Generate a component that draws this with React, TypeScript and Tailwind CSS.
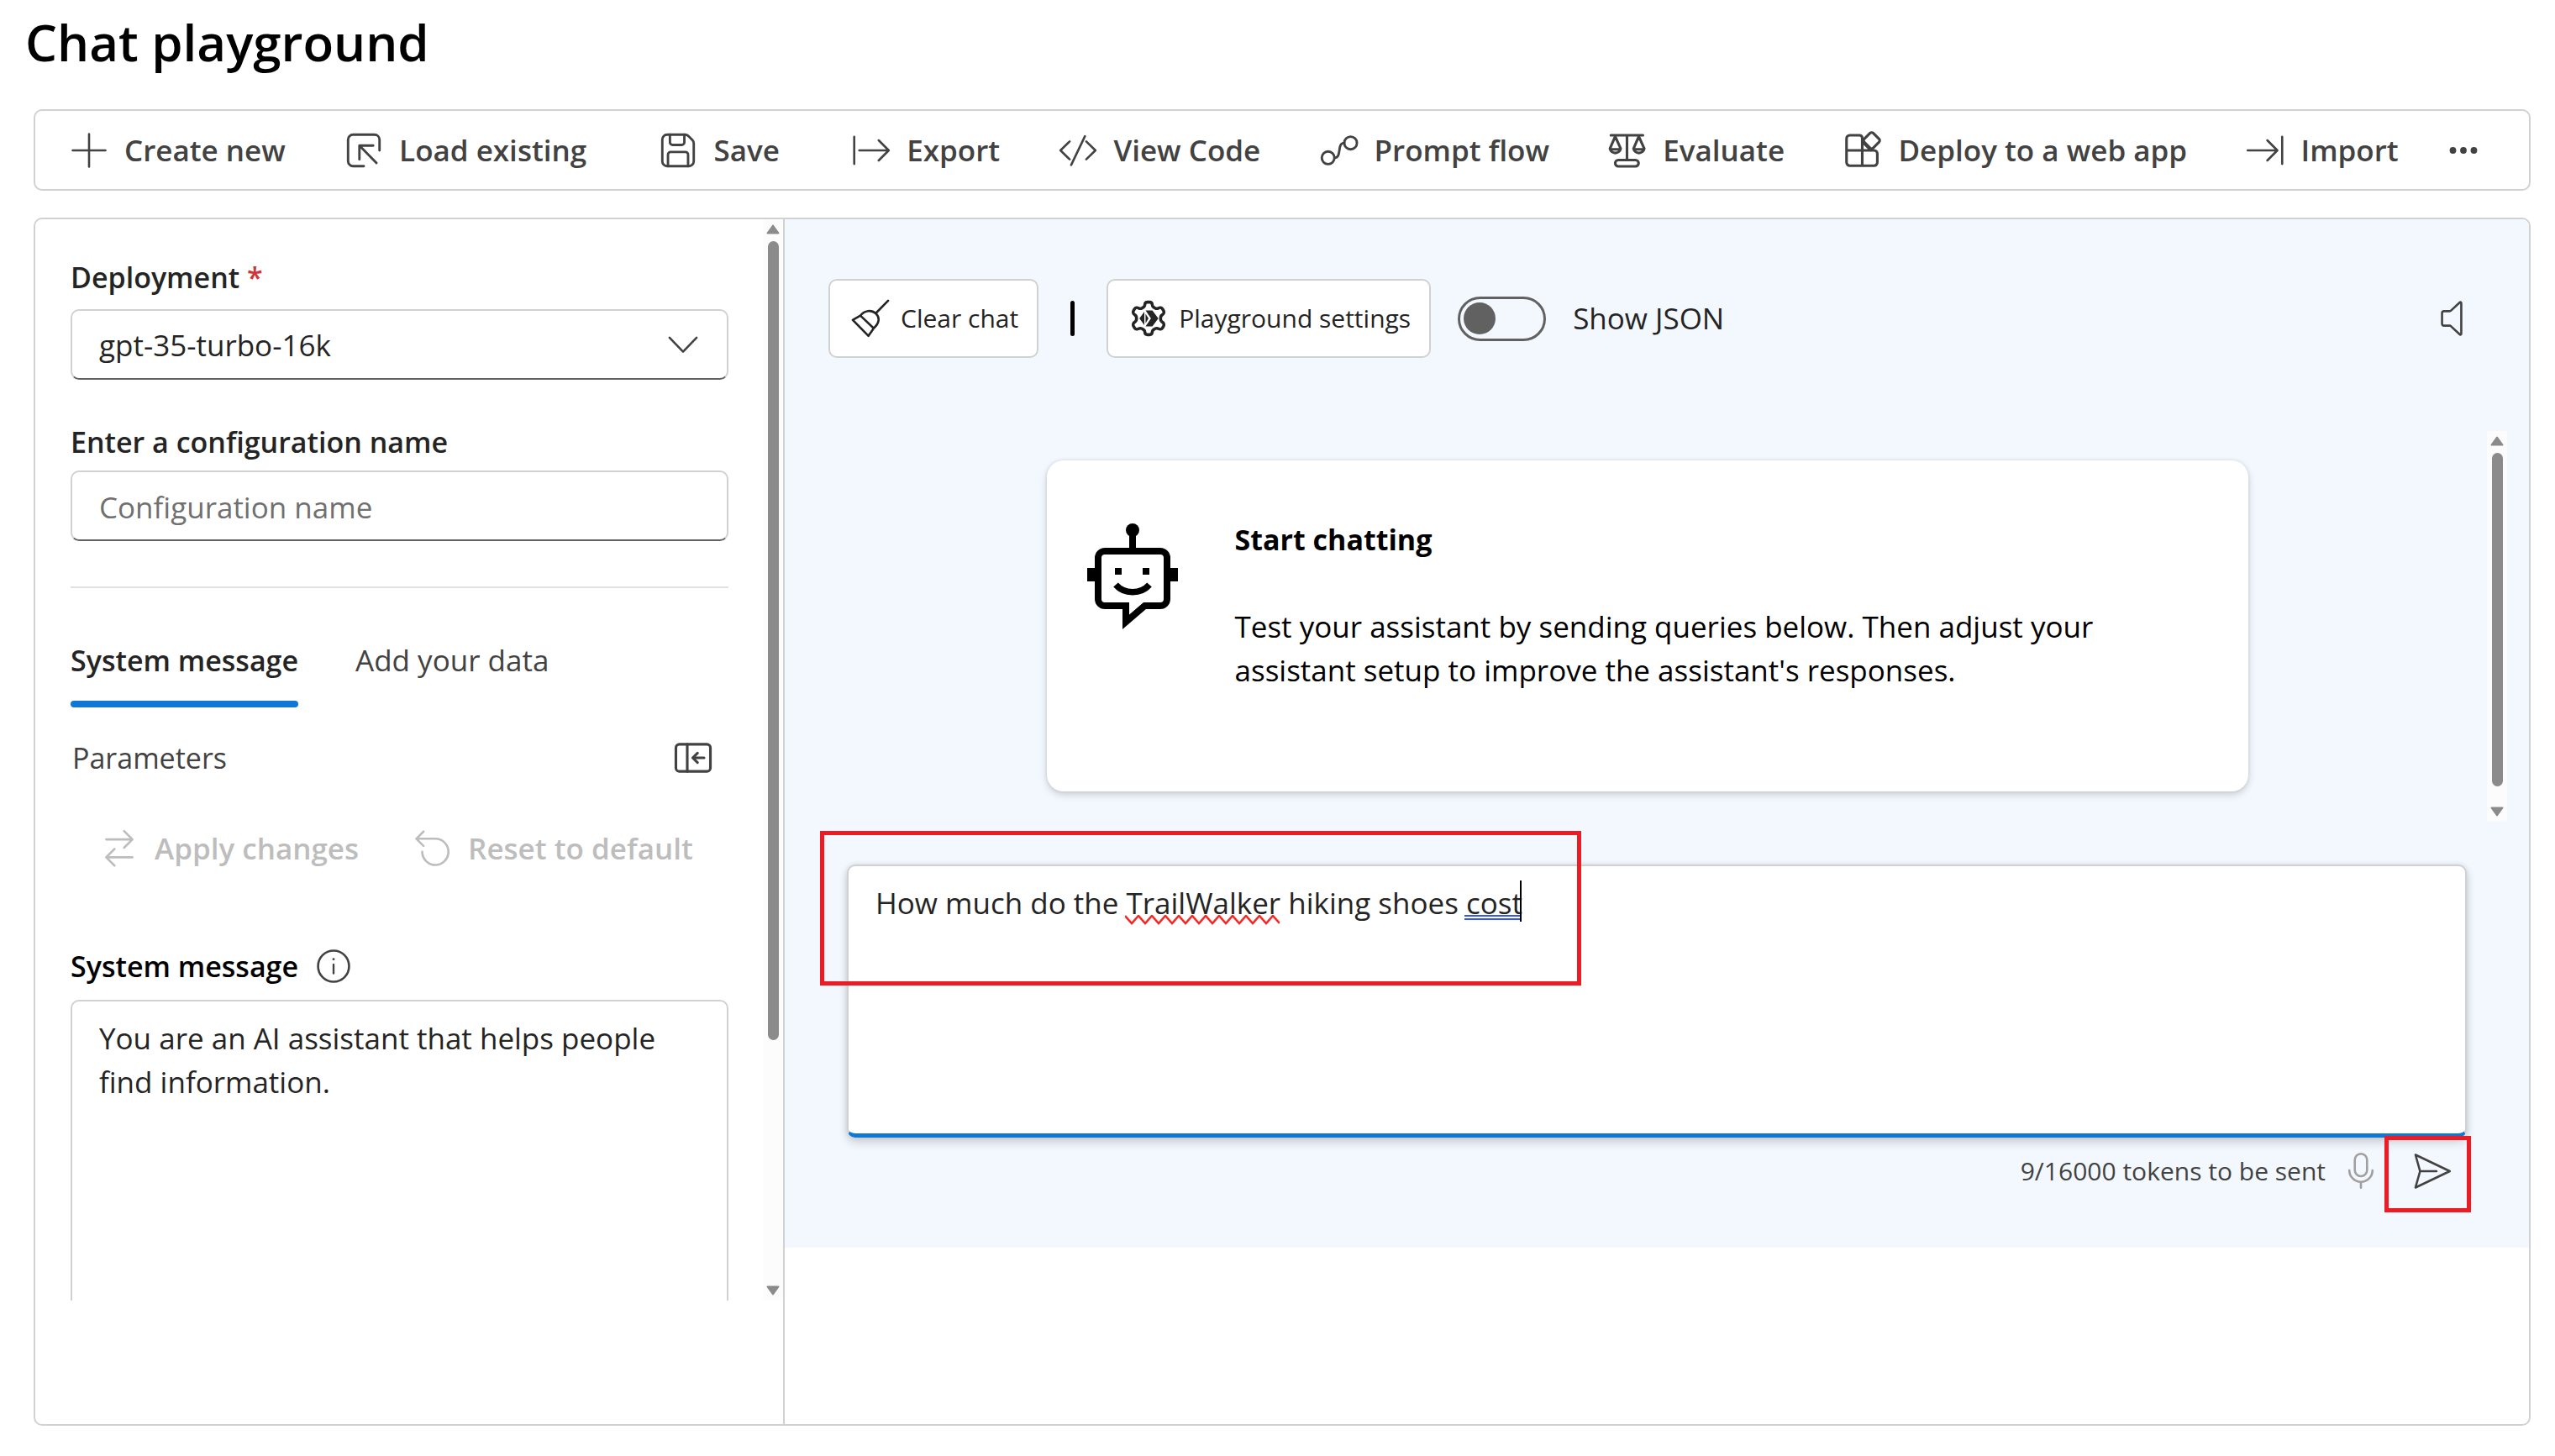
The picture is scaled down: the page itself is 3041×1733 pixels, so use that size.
import type { ReactNode } from "react";

type IconProps = { children: ReactNode; className?: string; weight?: number };

function Icon({ children, className = "size-[52px]", weight = 1 }: IconProps) {
  return (
    <svg
      viewBox="0 0 20 20"
      fill="none"
      stroke="currentColor"
      strokeWidth={weight}
      strokeLinecap="round"
      strokeLinejoin="round"
      aria-hidden="true"
      className={`shrink-0 ${className}`}
    >
      {children}
    </svg>
  );
}

const AddIcon = () => (
  <Icon>
    <path d="M10 2.5v15M2.5 10h15" />
  </Icon>
);
const LoadIcon = () => (
  <Icon weight={1.1}>
    <path d="M17.2 10V5A2.3 2.3 0 0 0 14.9 2.8H5.1A2.3 2.3 0 0 0 2.8 5.1v9.8a2.3 2.3 0 0 0 2.3 2.3H10" />
    <path d="M15.8 15.8 8 7.8M14.3 7.8H8v6.3" />
  </Icon>
);
const SaveIcon = () => (
  <Icon weight={1.1}>
    <path d="M2.8 5a2.2 2.2 0 0 1 2.2-2.2h8.2a2.2 2.2 0 0 1 1.5.6l1.9 1.9a2.2 2.2 0 0 1 .6 1.5V15a2.2 2.2 0 0 1-2.2 2.2H5A2.2 2.2 0 0 1 2.8 15Z" />
    <path d="M6.3 2.8v3.5a1.2 1.2 0 0 0 1.2 1.2h4.2a1.2 1.2 0 0 0 1.2-1.2V2.8M5.4 17.2v-5.3a1.2 1.2 0 0 1 1.2-1.2h6.8a1.2 1.2 0 0 1 1.2 1.2v5.3" />
  </Icon>
);
const ExportIcon = () => (
  <Icon>
    <path d="M2.2 3.8v12.4M4.5 10H18M13.4 5.4 18 10l-4.6 4.6" />
  </Icon>
);
const CodeIcon = () => (
  <Icon>
    <path d="M6.2 5.9 2 10l4.2 4.1M13.2 3.5 6.9 16.7M13.8 5.9 18 10l-4.2 4.1" />
  </Icon>
);
const FlowIcon = () => (
  <Icon weight={1.1}>
    <circle cx="4.9" cy="13.4" r="2.9" />
    <circle cx="15.2" cy="6.6" r="2.9" />
    <path d="M7.8 13.4c3.6 0 .9-6.8 4.5-6.8" />
  </Icon>
);
const EvaluateIcon = () => (
  <Icon weight={1.2}>
    <path d="M2.4 3.1h14.7M9.8 3.1v11" />
    <rect x="4.4" y="14.4" width="10.7" height="2.9" rx="1.4" />
    <path d="M4.4 3.6 2 9.2a2.5 2.5 0 0 0 4.9 0ZM15.2 3.6l-2.4 5.6a2.5 2.5 0 0 0 4.9 0ZM2.2 9.5h4.4M13 9.5h4.4" />
  </Icon>
);
const DeployIcon = () => (
  <Icon weight={1.2}>
    <path d="M9.8 10V4.3a1.2 1.2 0 0 0-1.2-1.2H4.1a1.5 1.5 0 0 0-1.5 1.5v10.9A1.5 1.5 0 0 0 4.1 17h11.1a1.5 1.5 0 0 0 1.5-1.5v-4A1.5 1.5 0 0 0 15.2 10H2.6M9.8 10v7M9.8 6l4 4" />
    <rect x="11.2" y="2.6" width="5.8" height="5.8" rx="1" transform="rotate(45 14.1 5.5)" />
  </Icon>
);
const ImportIcon = () => (
  <Icon>
    <path d="M17.8 3.8v12.4M2 10h13.5M11 5.4l4.6 4.6-4.6 4.6" />
  </Icon>
);
const MoreIcon = () => (
  <Icon>
    <g fill="currentColor" stroke="none">
      <circle cx="5.2" cy="10" r="1.5" />
      <circle cx="10" cy="10" r="1.5" />
      <circle cx="14.8" cy="10" r="1.5" />
    </g>
  </Icon>
);
const PanelIcon = () => (
  <Icon weight={1.2}>
    <rect x="2.1" y="3.8" width="15.8" height="12.4" rx="1.6" />
    <path d="M7.3 3.8v12.4M15 10H9.8M12 7.8 9.8 10l2.2 2.2" />
  </Icon>
);
const SwapIcon = () => (
  <Icon>
    <path d="M4 5.8h12M12.2 2 16 5.8l-3.8 3.8M16 14H4M7.8 10.2 4 14l3.8 3.8" />
  </Icon>
);
const ResetIcon = () => (
  <Icon>
    <path d="M5.8 2.2 2.5 5.5l3.3 3.3M2.5 5.5h8.7a6 6 0 1 1-6 6" />
  </Icon>
);
const InfoIcon = () => (
  <Icon>
    <circle cx="10" cy="10" r="7.1" />
    <path d="M10 9.2v4.1" strokeWidth=".9" />
    <circle cx="10" cy="6.8" r=".55" fill="currentColor" stroke="none" />
  </Icon>
);
const BroomIcon = () => (
  <Icon>
    <path d="m18.1 1.9-5.7 5.8M5.4 8.7c2-2.4 5-2.8 7-1s1.8 4.4-.9 6.8M5.4 8.7 1.9 10.7l7.2 7.3 2.4-3.5ZM5.4 8.7l6.1 5.8" />
  </Icon>
);
const SpeakerIcon = () => (
  <Icon>
    <path d="M6.5 6.7h2.6a.8.8 0 0 0 .5-.2l4.1-3.8a.4.4 0 0 1 .7.3v14a.4.4 0 0 1-.7.3l-4.1-3.8a.8.8 0 0 0-.5-.2H6.5a.9.9 0 0 1-.9-.9V7.6a.9.9 0 0 1 .9-.9Z" />
  </Icon>
);
const MicIcon = () => (
  <Icon>
    <rect x="7.2" y="2" width="5.6" height="10.3" rx="2.8" />
    <path d="M4.7 9.6a5.3 5.3 0 0 0 10.6 0M10 14.9v2.7" />
  </Icon>
);
const SendIcon = () => (
  <Icon>
    <path d="M1.9 2.5 17.6 10 1.9 17.5 4 10ZM4 10h7.5" />
  </Icon>
);

function GearIcon() {
  return (
    <svg
      viewBox="0 0 24 24"
      fill="none"
      stroke="currentColor"
      strokeWidth="1.7"
      strokeLinejoin="round"
      aria-hidden="true"
      className="size-[52px] shrink-0 px-px"
    >
      <path d="M12.6 2.7h-1.2a1.5 1.5 0 0 0-1.5 1.4 2 2 0 0 1-1.1 1.7l-.5.3a2 2 0 0 1-2 0 1.7 1.7 0 0 0-2.3.5l-.6 1a1.7 1.7 0 0 0 .7 2.3 2 2 0 0 1 1 1.8v.6a2 2 0 0 1-1 1.8 1.7 1.7 0 0 0-.7 2.3l.6 1a1.7 1.7 0 0 0 2.3.5 2 2 0 0 1 2 0l.5.3a2 2 0 0 1 1.1 1.7 1.5 1.5 0 0 0 1.5 1.4h1.2a1.5 1.5 0 0 0 1.5-1.4 2 2 0 0 1 1.1-1.7l.5-.3a2 2 0 0 1 2 0 1.7 1.7 0 0 0 2.3-.5l.6-1a1.7 1.7 0 0 0-.7-2.3 2 2 0 0 1-1-1.8v-.6a2 2 0 0 1 1-1.8 1.7 1.7 0 0 0 .7-2.3l-.6-1a1.7 1.7 0 0 0-2.3-.5 2 2 0 0 1-2 0l-.5-.3a2 2 0 0 1-1.1-1.7 1.5 1.5 0 0 0-1.5-1.4Z" />
      <g fill="currentColor" stroke="none">
        <path d="M10.3 7.4h3.9l3.4 4.6-3.4 4.6h-3.9l3.1-4.6Z" />
        <path d="M9.6 8.2v7.6L6.8 12ZM10.3 9.3l1.7 2.7-1.7 2.7Z" />
      </g>
    </svg>
  );
}

function RobotIcon() {
  return (
    <svg viewBox="0 0 108 128" aria-hidden="true" className="h-[128px] w-[108px] shrink-0">
      <circle cx="54" cy="9" r="8" />
      <path d="M50 14h8v18h-8zM0 54h11v16H0zM97 54h11v16H97zM33 54h8v8h-8zM66 54h8v8h-8z" />
      <g fill="none" stroke="#000" strokeWidth="8">
        <path d="M46 99H21a8 8 0 0 1-8-8V42a8 8 0 0 1 8-8h66a8 8 0 0 1 8 8v49a8 8 0 0 1-8 8H68.5L46 118.3Z" />
        <path d="M34 74c10 11.5 30 11.5 40 0" strokeWidth="7.5" />
      </g>
      <path d="M50 94h16l-16 14z" fill="#fff" />
    </svg>
  );
}

function Arrow({ down = false }: { down?: boolean }) {
  return (
    <svg
      viewBox="0 0 16 12"
      fill="#8b8b8b"
      stroke="#8b8b8b"
      strokeWidth="2"
      strokeLinejoin="round"
      aria-hidden="true"
      className="h-3 w-4 shrink-0"
    >
      <path d={down ? "M1.5 1.5h13L8 10.5Z" : "M1.5 10.5h13L8 1.5Z"} />
    </svg>
  );
}

function Scrollbar({ thumb }: { thumb: string }) {
  return (
    <div className="flex w-6 shrink-0 flex-col items-center bg-[#fcfcfc] py-1.5">
      <Arrow />
      <div className="flex w-full flex-1 justify-center py-2">
        <div className={`w-[13px] rounded-full bg-[#8b8b8b] ${thumb}`} />
      </div>
      <Arrow down />
    </div>
  );
}

const tools = [
  { label: "Create new", icon: <AddIcon />, className: "" },
  { label: "Load existing", icon: <LoadIcon />, className: "" },
  { label: "Save", icon: <SaveIcon />, className: "mx-4" },
  { label: "Export", icon: <ExportIcon />, className: "" },
  { label: "View Code", icon: <CodeIcon />, className: "" },
  { label: "Prompt flow", icon: <FlowIcon />, className: "" },
  { label: "Evaluate", icon: <EvaluateIcon />, className: "" },
  { label: "Deploy to a web app", icon: <DeployIcon />, className: "" },
  { label: "Import", icon: <ImportIcon />, className: "" },
];

function Toolbar() {
  return (
    <div
      role="toolbar"
      aria-label="Playground actions"
      className="mt-10 flex h-[97px] items-center justify-between rounded-[10px] border-2 border-[#d1d1d1] pl-[38px] pr-[52px] font-semibold text-[#424242]"
    >
      {tools.map((tool) => (
        <button key={tool.label} type="button" className={`flex items-center gap-4 whitespace-nowrap ${tool.className}`}>
          {tool.icon}
          {tool.label}
        </button>
      ))}
      <button type="button" aria-label="More actions" className="-ml-4">
        <MoreIcon />
      </button>
    </div>
  );
}

function SetupPanel() {
  return (
    <div className="flex h-[1287px]">
      <div className="min-w-0 flex-1 overflow-hidden pl-[42px] pr-[41px] pt-[43px]">
        <label htmlFor="deployment" className="block text-[34px] font-semibold">
          Deployment <span className="text-[#d13438]">*</span>
        </label>
        <div className="relative mt-3">
          <select
            id="deployment"
            className="h-[84px] w-full appearance-none rounded-[10px] border-2 border-[#d1d1d1] border-b-[#616161] bg-white px-8 pt-0.5"
          >
            <option>gpt-35-turbo-16k</option>
          </select>
          <Icon className="pointer-events-none absolute right-7 top-4 size-[52px] text-[#424242]">
            <path d="M3.8 6.9 10 13.3l6.2-6.4" />
          </Icon>
        </div>

        <label htmlFor="config-name" className="mt-12 block text-[34px] font-semibold">
          Enter a configuration name
        </label>
        <input
          id="config-name"
          type="text"
          placeholder="Configuration name"
          className="mt-2 h-[84px] w-full rounded-[10px] border-2 border-[#d1d1d1] border-b-[#616161] px-8 pt-0.5 placeholder:text-[#707070]"
        />

        <hr className="mt-[54px] border-t-2 border-[#e0e0e0]" />

        <div role="tablist" className="mt-[60px] flex gap-[68px]">
          <button type="button" role="tab" aria-selected="true" className="text-[34px] font-semibold">
            System message
            <span className="mt-[22px] block h-2 rounded-full bg-[#0f78d4]" />
          </button>
          <button type="button" role="tab" aria-selected="false" className="self-start text-[#424242]">
            Add your data
          </button>
        </div>

        <div className="mt-[34px] flex items-center justify-between pl-0.5 pr-4 text-[34px] text-[#424242]">
          <button type="button">Parameters</button>
          <button type="button" aria-label="Collapse panel">
            <PanelIcon />
          </button>
        </div>

        <div className="mt-14 flex gap-[62px] whitespace-nowrap pl-8 font-semibold text-[#bdbdbd]">
          <button type="button" disabled className="flex items-center gap-4">
            <SwapIcon />
            Apply changes
          </button>
          <button type="button" disabled className="flex items-center gap-4">
            <ResetIcon />
            Reset to default
          </button>
        </div>

        <div className="mt-[88px] flex items-center gap-4">
          <label htmlFor="system-message" className="text-[34px] font-semibold text-black">
            System message
          </label>
          <button type="button" aria-label="About the system message" className="text-[#424242]">
            <InfoIcon />
          </button>
        </div>
        <textarea
          id="system-message"
          className="mt-3.5 block h-[520px] w-full resize-none rounded-[10px] border-2 border-[#d1d1d1] px-8 py-[18px]"
          defaultValue="You are an AI assistant that helps people find information."
        />
      </div>
      <Scrollbar thumb="h-[951px]" />
    </div>
  );
}

function ChatHeader() {
  return (
    <div className="flex items-center pl-[52px] pr-[66px]">
      <button
        type="button"
        className="flex h-[94px] items-center gap-2.5 whitespace-nowrap rounded-[10px] border-2 border-[#d1d1d1] bg-white px-[22px] text-[30px]"
      >
        <BroomIcon />
        Clear chat
      </button>
      <div className="mx-[38px] h-[42px] w-[5px] rounded-full bg-black" />
      <button
        type="button"
        className="flex h-[94px] items-center gap-2.5 whitespace-nowrap rounded-[10px] border-2 border-[#d1d1d1] bg-white px-[22px] text-[30px]"
      >
        <GearIcon />
        Playground settings
      </button>
      <input
        id="show-json"
        type="checkbox"
        role="switch"
        className="ml-8 flex h-[53px] w-[105px] appearance-none items-center rounded-full border-[3px] border-[#616161] px-1 before:size-[38px] before:rounded-full before:bg-[#616161]"
      />
      <label htmlFor="show-json" className="ml-8">
        Show JSON
      </label>
      <button type="button" aria-label="Read replies aloud" className="ml-auto text-[#424242]">
        <SpeakerIcon />
      </button>
    </div>
  );
}

function StartCard() {
  return (
    <div className="mx-auto flex h-[394px] w-full max-w-[1430px] gap-[68px] rounded-[20px] bg-white px-12 pt-[68px] text-black shadow-[0_4px_10px_rgba(0,0,0,0.16),0_0_4px_rgba(0,0,0,0.1)]">
      <div className="pt-1.5">
        <RobotIcon />
      </div>
      <div>
        <h2 className="text-[34px] font-bold">Start chatting</h2>
        <p className="mt-[52px] max-w-[1060px]">
          Test your assistant by sending queries below. Then adjust your assistant setup to improve the assistant's
          responses.
        </p>
      </div>
    </div>
  );
}

function Composer() {
  return (
    <div className="mt-[51px] px-[74px]">
      <div className="relative">
        <textarea
          aria-label="User message"
          spellCheck={false}
          className="block h-[325px] w-full resize-none rounded-[10px] border-2 border-b-[5px] border-[#d1d1d1] border-b-[#0f78d4] bg-white px-8 py-[18px] shadow-[0_6px_12px_rgba(0,0,0,0.16),0_0_6px_rgba(0,0,0,0.1)]"
          defaultValue="How much do the TrailWalker hiking shoes cost"
        />
        <svg
          viewBox="0 0 184 12"
          fill="none"
          stroke="#f22"
          strokeWidth="2.5"
          aria-hidden="true"
          className="pointer-events-none absolute left-[331px] top-[60px] h-3 w-[184px]"
        >
          <path d="M0 1l8 9 8-9 8 9 8-9 8 9 8-9 8 9 8-9 8 9 8-9 8 9 8-9 8 9 8-9 8 9 8-9 8 9 8-9 8 9 8-9 8 9 8-9 8 9" />
        </svg>
        <div className="pointer-events-none absolute left-[735px] top-[60px] h-[6px] w-[66px] border-y-2 border-[#3355ff]" />
        <div className="pointer-events-none absolute left-[801px] top-[19px] h-[49px] w-0.5 bg-black" />
        <div className="pointer-events-none absolute left-[-32px] top-[-40px] h-[184px] w-[906px] border-[5px] border-[#ed1c24]" />
      </div>
      <div className="mt-3.5 flex items-center justify-end pr-3.5">
        <span className="mr-4 text-[30px] text-[#424242]">9/16000 tokens to be sent</span>
        <button type="button" aria-label="Dictate" className="mr-[34px] text-[#a19f9d]">
          <MicIcon />
        </button>
        <button type="button" aria-label="Send" className="relative text-[#424242]">
          <SendIcon />
          <span className="absolute left-[-32px] top-[-16px] h-[91px] w-[103px] border-[5px] border-[#ed1c24]" />
        </button>
      </div>
    </div>
  );
}

export default function App() {
  return (
    <div className="min-h-screen bg-white pb-9 pl-10 pr-[29px] pt-2.5 font-['Open_Sans',sans-serif] text-[35px] leading-[52px] text-[#242424]">
      <h1 className="-ml-2.5 text-[60px] font-semibold leading-[80px] text-black">Chat playground</h1>
      <Toolbar />
      <div className="mt-8 flex overflow-hidden rounded-[10px] border-2 border-[#d1d1d1]">
        <aside className="w-[892px] shrink-0 border-r-2 border-[#d1d1d1] pb-[147px]">
          <SetupPanel />
        </aside>
        <main className="min-w-0 flex-1 self-start bg-[#f3f8fe] pb-[65px] pt-[71px]">
          <ChatHeader />
          <div className="mt-[87px] flex h-[465px] pl-[27px] pr-[26px]">
            <div className="min-w-0 flex-1 pt-[35px]">
              <StartCard />
            </div>
            <Scrollbar thumb="h-[397px]" />
          </div>
          <Composer />
        </main>
      </div>
    </div>
  );
}
